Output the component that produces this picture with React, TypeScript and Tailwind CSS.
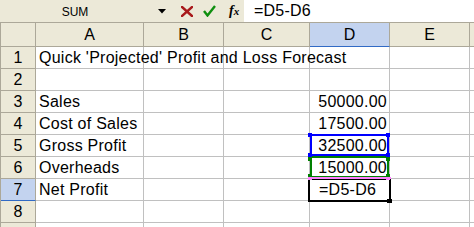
import React from "react";

const rows: { n: number; label?: string; a?: string; d?: string; edit?: boolean }[] = [
  { n: 1, a: "Quick 'Projected' Profit and Loss Forecast" },
  { n: 2 },
  { n: 3, a: "Sales", d: "50000.00" },
  { n: 4, a: "Cost of Sales", d: "17500.00" },
  { n: 5, a: "Gross Profit", d: "32500.00" },
  { n: 6, a: "Overheads", d: "15000.00" },
  { n: 7, a: "Net Profit", d: "=D5-D6", edit: true },
  { n: 8 },
  { n: 9 },
];

export default function App() {
  return (
    <div className="relative w-[474px] h-[227px] overflow-hidden bg-white font-['Liberation_Sans',Arial,sans-serif] text-black">
      {/* Formula bar */}
      <div className="flex h-[23px] border-b border-[#aca899] bg-[#ece9d8]">
        <div className="w-[150px] flex items-center justify-center text-[12px] pt-[1px]">SUM</div>
        <div className="ml-[8px] w-[8px] flex items-center">
          <svg width="8" height="5" viewBox="0 0 8 5">
            <polygon points="0,0 8,0 4,4.5" fill="#000" />
          </svg>
        </div>
        <div className="ml-[15px] w-[12px] flex items-center">
          <svg width="12" height="11" viewBox="0 0 12 11">
            <path d="M1 1 L11 10 M11 1 L1 10" stroke="#a8191b" strokeWidth="2.4" strokeLinecap="square" />
          </svg>
        </div>
        <div className="ml-[10px] w-[13px] flex items-center">
          <svg width="13" height="12" viewBox="0 0 13 12">
            <path d="M1 6 L4.5 10.5 L12 1" stroke="#0f8f0f" strokeWidth="2.4" fill="none" />
          </svg>
        </div>
        <div className="ml-[13px] w-[14px] flex items-center font-['Liberation_Serif',serif] italic font-bold text-[14px] leading-none">
          f<span className="text-[11px]">x</span>
        </div>
        <div className="ml-[1px] flex-1 bg-white flex items-center pl-[10px] text-[16px] tracking-[0.2px]">=D5-D6</div>
      </div>

      {/* Column header row */}
      <div className="flex h-[24px] bg-[#ece9d8] text-[16px] border-l border-[#aca899]">
        <div className="w-[35px] border-r border-b border-[#aca899]" />
        <div className="w-[108px] border-r border-b border-[#aca899] flex items-center justify-center">A</div>
        <div className="w-[80px] border-r border-b border-[#aca899] flex items-center justify-center">B</div>
        <div className="w-[86px] border-r border-b border-[#aca899] flex items-center justify-center">C</div>
        <div className="w-[80px] border-r border-[#aca899] border-b border-b-[#316ac5] bg-[#c3d3ef] flex items-center justify-center">D</div>
        <div className="w-[80px] border-r border-b border-[#aca899] flex items-center justify-center">E</div>
        <div className="flex-1 border-b border-[#aca899]" />
      </div>

      {/* Rows */}
      {rows.map((r) => (
        <div key={r.n} className="flex h-[22px] text-[16px] tracking-[0.25px] border-l border-[#aca899]">
          <div
            className={
              r.n === 7
                ? "w-[35px] border-r border-[#aca899] border-b border-b-[#316ac5] bg-[#c3d3ef] flex items-center justify-center"
                : "w-[35px] border-r border-b border-[#aca899] bg-[#ece9d8] flex items-center justify-center"
            }
          >
            {r.n < 9 ? r.n : null}
          </div>
          <div className="w-[108px] border-r border-b border-[#c0c0c0] flex items-center pl-[3px] whitespace-nowrap overflow-visible">
            {r.a && <span className="relative z-10">{r.a}</span>}
          </div>
          <div className="w-[80px] border-r border-b border-[#c0c0c0]" />
          <div className="w-[86px] border-r border-b border-[#c0c0c0]" />
          <div
            className={
              r.edit
                ? "w-[80px] border-r border-b border-[#c0c0c0] flex items-center pl-[9px]"
                : "w-[80px] border-r border-b border-[#c0c0c0] flex items-center justify-end pr-[2px]"
            }
          >
            {r.d}
          </div>
          <div className="w-[80px] border-r border-b border-[#c0c0c0]" />
          <div className="flex-1 border-b border-[#c0c0c0]" />
        </div>
      ))}

      {/* Range finder: D5 blue */}
      <div className="absolute left-[310px] top-[134px] w-[79px] h-[22px] border-2 border-[#0000ff]" />
      {/* D6 green */}
      <div className="absolute left-[310px] top-[156px] w-[79px] h-[22px] border-2 border-[#008000]" />
      {/* D7 active cell */}
      <div className="absolute left-[308px] top-[178px] w-[83px] h-[24px] border-2 border-black" />
      {/* pink line */}
      <div className="absolute left-[308px] top-[177px] w-[83px] h-[2px] bg-[#ff80ff]" />

      {/* handles */}
      <div className="absolute left-[308px] top-[133px] w-[4px] h-[4px] bg-[#0000ff]" />
      <div className="absolute left-[386px] top-[133px] w-[4px] h-[4px] bg-[#0000ff]" />
      <div className="absolute left-[308px] top-[157px] w-[4px] h-[4px] bg-[#008000]" />
      <div className="absolute left-[386px] top-[157px] w-[4px] h-[4px] bg-[#008000]" />
      <div className="absolute left-[308px] top-[153px] w-[4px] h-[4px] bg-[#0000ff]" />
      <div className="absolute left-[386px] top-[153px] w-[4px] h-[4px] bg-[#0000ff]" />
      <div className="absolute left-[308px] top-[174px] w-[4px] h-[3px] bg-[#008000]" />
      <div className="absolute left-[386px] top-[174px] w-[4px] h-[3px] bg-[#008000]" />
      <div className="absolute left-[308px] top-[177px] w-[4px] h-[3px] bg-[#ff80ff]" />
      <div className="absolute left-[386px] top-[177px] w-[4px] h-[3px] bg-[#ff80ff]" />
      {/* fill handle */}
      <div className="absolute left-[387px] top-[199px] w-[5px] h-[4px] bg-black" />
    </div>
  );
}
